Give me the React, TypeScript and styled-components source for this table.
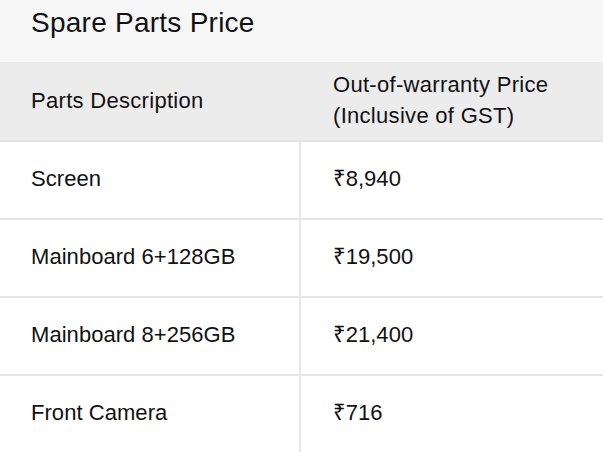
import React from "react";
import styled, { createGlobalStyle } from "styled-components";

const Global = createGlobalStyle`
  html, body { margin: 0; padding: 0; background: #ffffff; }
  body { font-family: "Liberation Sans", "Noto Sans", Arial, sans-serif; color: #111111; }
`;

const Page = styled.div`
  width: 603px;
  height: 452px;
  overflow: hidden;
  background: #ffffff;
`;

const TitleBar = styled.div`
  height: 62px;
  box-sizing: border-box;
  padding: 6px 0 0 31px;
  background: #f7f7f7;
`;

const Title = styled.h2`
  margin: 0;
  font-size: 28px;
  line-height: 34px;
  font-weight: 400;
  letter-spacing: 0.25px;
  color: #111111;
`;

const Table = styled.div`
  display: grid;
  grid-template-columns: 301px 1fr;
`;

const HeadCell = styled.div<{ $first?: boolean }>`
  box-sizing: border-box;
  height: 80px;
  display: flex;
  align-items: center;
  background: #ececec;
  border-bottom: 2px solid #e2e2e2;
  padding-left: ${(p) => (p.$first ? "31px" : "32px")};
  font-size: 22px;
  line-height: 31px;
  letter-spacing: 0.3px;
  padding-bottom: 2px;
`;

const Cell = styled.div<{ $first?: boolean }>`
  box-sizing: border-box;
  height: 78px;
  display: flex;
  align-items: center;
  padding-left: ${(p) => (p.$first ? "31px" : "32px")};
  border-bottom: 2px solid #e6e6e6;
  border-right: ${(p) => (p.$first ? "2px solid #e6e6e6" : "none")};
  font-size: 22px;
  line-height: 31px;
  letter-spacing: 0.05px;
  padding-bottom: 3px;
`;

const rows: [string, string][] = [
  ["Screen", "₹8,940"],
  ["Mainboard 6+128GB", "₹19,500"],
  ["Mainboard 8+256GB", "₹21,400"],
  ["Front Camera", "₹716"],
];

export default function App() {
  return (
    <Page>
      <Global />
      <TitleBar>
        <Title>Spare Parts Price</Title>
      </TitleBar>
      <Table>
        <HeadCell $first>Parts Description</HeadCell>
        <HeadCell>
          Out-of-warranty Price
          <br />
          (Inclusive of GST)
        </HeadCell>
        {rows.map(([name, price]) => (
          <React.Fragment key={name}>
            <Cell $first>{name}</Cell>
            <Cell>{price}</Cell>
          </React.Fragment>
        ))}
      </Table>
    </Page>
  );
}
